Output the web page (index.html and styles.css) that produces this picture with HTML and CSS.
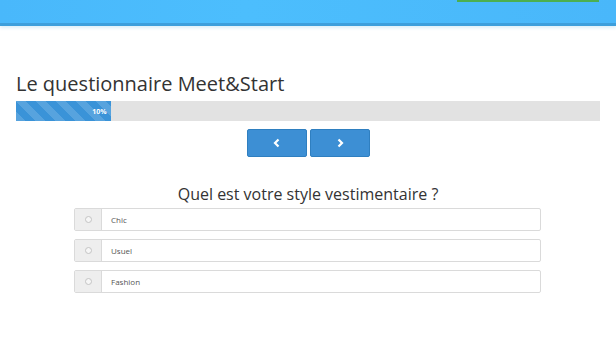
FILE: index.html
```html
<!DOCTYPE html>
<html>
<head>
<meta charset="utf-8">
<link rel="stylesheet" href="styles.css">
</head>
<body>
<header class="topbar">
  <div class="topbar-btn"></div>
</header>
<main class="content">
  <h1 class="title">Le questionnaire Meet&amp;Start</h1>
  <div class="progress">
    <div class="progress-fill" style="width:16.2%"><span>10%</span></div>
  </div>
  <div class="nav">
    <button class="navbtn" aria-label="Précédent">
      <svg width="10" height="10" viewBox="0 0 10 10"><path d="M6.5 1.5 L3 5 L6.5 8.5" fill="none" stroke="#fff" stroke-width="2.2"/></svg>
    </button>
    <button class="navbtn" aria-label="Suivant">
      <svg width="10" height="10" viewBox="0 0 10 10"><path d="M3.5 1.5 L7 5 L3.5 8.5" fill="none" stroke="#fff" stroke-width="2.2"/></svg>
    </button>
  </div>
  <h2 class="question">Quel est votre style vestimentaire ?</h2>
  <div class="options">
    <label class="option"><span class="addon"><span class="radio"></span></span><span class="opt-text">Chic</span></label>
    <label class="option"><span class="addon"><span class="radio"></span></span><span class="opt-text">Usuel</span></label>
    <label class="option"><span class="addon"><span class="radio"></span></span><span class="opt-text">Fashion</span></label>
  </div>
</main>
</body>
</html>
```
FILE: styles.css
```css
html, body {
  margin: 0;
  padding: 0;
  background: #fff;
  font-family: "Open Sans", "Liberation Sans", sans-serif;
  color: #333;
}
.topbar {
  height: 23px;
  background: linear-gradient(to right, #49b8fb, #4cbefd 40%, #49b7fa);
  border-bottom: 3px solid #3d9fdc;
  box-shadow: 0 2px 3px rgba(120, 190, 230, 0.25);
  display: flex;
  justify-content: flex-end;
  padding-right: 17px;
}
.topbar-btn {
  width: 142px;
  height: 2px;
  background: #4caf50;
}
.content {
  padding: 0 16px;
}
.title {
  margin: 44px 0 0;
  font-size: 20px;
  font-weight: 400;
  line-height: 28px;
  color: #333;
}
.progress {
  margin-top: 3px;
  height: 20px;
  background: #e2e2e2;
  display: flex;
}
.progress-fill {
  height: 100%;
  background-color: #3a93d8;
  background-image: linear-gradient(45deg, rgba(255,255,255,.15) 25%, transparent 25%, transparent 50%, rgba(255,255,255,.15) 50%, rgba(255,255,255,.15) 75%, transparent 75%, transparent);
  background-size: 20px 20px;
  display: flex;
  align-items: center;
  justify-content: flex-end;
  padding-right: 4px;
  box-sizing: border-box;
}
.progress-fill span {
  color: #fff;
  font-size: 7px;
  font-weight: 700;
}
.nav {
  display: flex;
  justify-content: center;
  gap: 3px;
  margin-top: 8px;
  padding-left: 1px;
}
.navbtn {
  width: 60px;
  height: 28px;
  border: 1px solid #2f7fc0;
  border-radius: 2px;
  background: #3d8fd4;
  display: flex;
  align-items: center;
  justify-content: center;
  padding: 0;
}
.question {
  margin: 27px 0 0;
  text-align: center;
  font-size: 16px;
  font-weight: 400;
  line-height: 20px;
  color: #333;
}
.options {
  margin: 4px 0 0 58px;
  width: 467px;
  display: flex;
  flex-direction: column;
  gap: 8px;
}
.option {
  display: flex;
  height: 23px;
  border: 1px solid #dadada;
  border-radius: 2px;
  box-sizing: border-box;
  background: #fff;
}
.addon {
  width: 26px;
  background: #eeeeee;
  border-right: 1px solid #dadada;
  display: flex;
  align-items: center;
  justify-content: center;
}
.radio {
  width: 5px;
  height: 5px;
  border-radius: 50%;
  border: 1px solid #c4c4c4;
  background: #f6f6f6;
}
.opt-text {
  font-size: 8px;
  color: #555;
  display: flex;
  align-items: center;
  padding-left: 9px;
}
```
